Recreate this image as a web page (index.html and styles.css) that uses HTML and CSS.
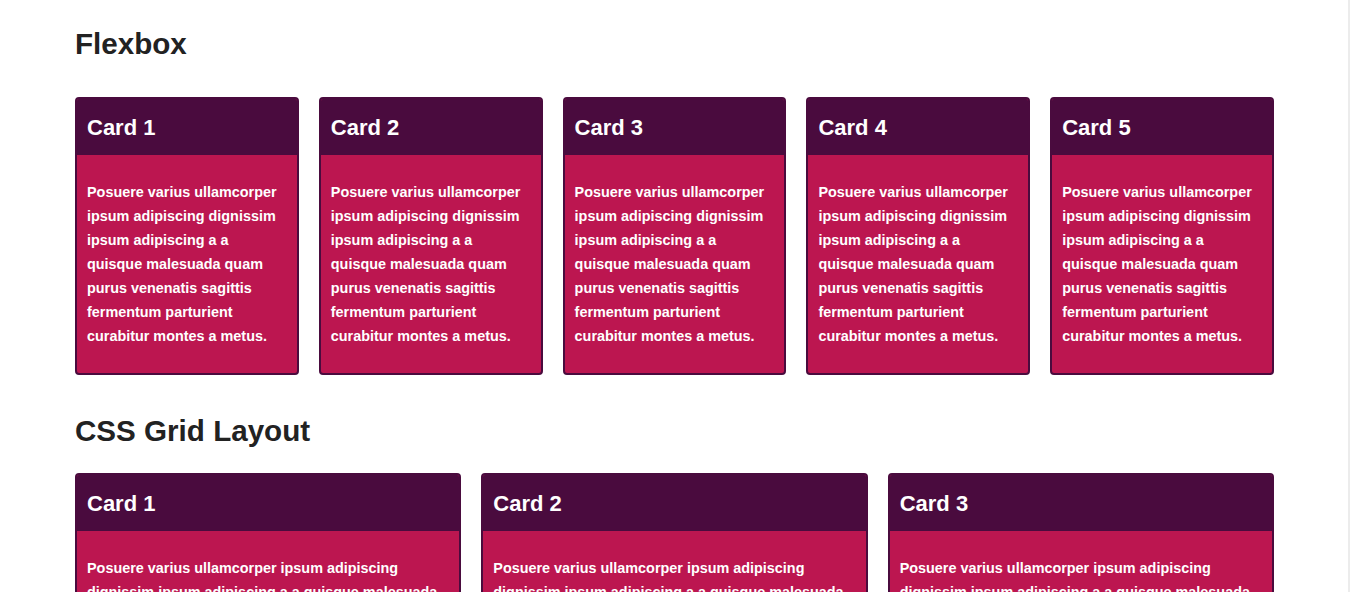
FILE: index.html
```html
<!DOCTYPE html>
<html lang="en">
<head>
<meta charset="utf-8">
<title>Flexbox and Grid</title>
<link rel="stylesheet" href="styles.css">
</head>
<body>
<main class="container">
  <h1 class="section-title title-flex">Flexbox</h1>
  <div class="flex-row">
    <article class="card"><h2 class="card-head">Card 1</h2><div class="card-body"><p>Posuere varius ullamcorper ipsum adipiscing dignissim ipsum adipiscing a a quisque malesuada quam purus venenatis sagittis fermentum parturient curabitur montes a metus.</p></div></article>
    <article class="card"><h2 class="card-head">Card 2</h2><div class="card-body"><p>Posuere varius ullamcorper ipsum adipiscing dignissim ipsum adipiscing a a quisque malesuada quam purus venenatis sagittis fermentum parturient curabitur montes a metus.</p></div></article>
    <article class="card"><h2 class="card-head">Card 3</h2><div class="card-body"><p>Posuere varius ullamcorper ipsum adipiscing dignissim ipsum adipiscing a a quisque malesuada quam purus venenatis sagittis fermentum parturient curabitur montes a metus.</p></div></article>
    <article class="card"><h2 class="card-head">Card 4</h2><div class="card-body"><p>Posuere varius ullamcorper ipsum adipiscing dignissim ipsum adipiscing a a quisque malesuada quam purus venenatis sagittis fermentum parturient curabitur montes a metus.</p></div></article>
    <article class="card"><h2 class="card-head">Card 5</h2><div class="card-body"><p>Posuere varius ullamcorper ipsum adipiscing dignissim ipsum adipiscing a a quisque malesuada quam purus venenatis sagittis fermentum parturient curabitur montes a metus.</p></div></article>
  </div>
  <h1 class="section-title title-grid">CSS Grid Layout</h1>
  <div class="grid-row">
    <article class="card"><h2 class="card-head">Card 1</h2><div class="card-body"><p>Posuere varius ullamcorper ipsum adipiscing dignissim ipsum adipiscing a a quisque malesuada quam purus venenatis sagittis fermentum parturient curabitur montes a metus.</p></div></article>
    <article class="card"><h2 class="card-head">Card 2</h2><div class="card-body"><p>Posuere varius ullamcorper ipsum adipiscing dignissim ipsum adipiscing a a quisque malesuada quam purus venenatis sagittis fermentum parturient curabitur montes a metus.</p></div></article>
    <article class="card"><h2 class="card-head">Card 3</h2><div class="card-body"><p>Posuere varius ullamcorper ipsum adipiscing dignissim ipsum adipiscing a a quisque malesuada quam purus venenatis sagittis fermentum parturient curabitur montes a metus.</p></div></article>
  </div>
</main>
</body>
</html>
```
FILE: styles.css
```css
html {
  background: linear-gradient(to left, #ececec 0, #ececec 2px, #ffffff 2px);
}
body {
  margin: 0;
  padding-right: 1px;
  font-family: "Liberation Sans", Arial, sans-serif;
  color: #222222;
}
.container {
  max-width: 1199px;
  margin: 0 auto;
  padding-top: 27px;
}
.section-title {
  font-size: 29.6px;
  line-height: 34px;
  font-weight: 700;
  margin: 0;
  color: #222222;
}
.title-flex {
  margin-bottom: 36px;
}
.title-grid {
  margin-top: 39px;
  margin-bottom: 25px;
}
.flex-row {
  display: flex;
  gap: 20px;
}
.flex-row .card {
  flex: 1 1 0;
}
.grid-row {
  display: grid;
  grid-template-columns: repeat(3, 1fr);
  gap: 20px;
}
.card {
  border: 2px solid #4a0b3e;
  border-radius: 4px;
  background: #bc1650;
  overflow: hidden;
  color: #ffffff;
}
.card-head {
  margin: 0;
  background: #4a0b3e;
  font-size: 22px;
  line-height: 26px;
  font-weight: 700;
  padding: 16px 10px 14px;
}
.card-body {
  padding: 25px 10px;
}
.card-body p {
  margin: 0;
  font-size: 14.4px;
  line-height: 24px;
  font-weight: 700;
}
```
